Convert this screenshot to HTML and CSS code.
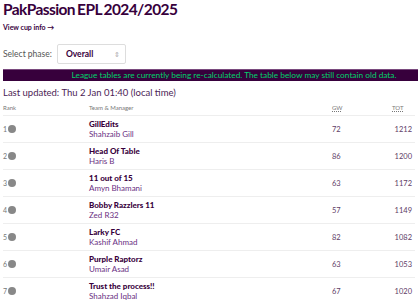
FILE: index.html
```
<!DOCTYPE html>
<html lang="en">
<head>
    <meta charset="UTF-8">
    <title>PakPassion EPL 2024/2025</title>
    <link rel="stylesheet" href="styles.css">
</head>
<body>
    <div class="page">
        <h1>PakPassion EPL 2024/2025</h1>
        <a class="cup-link" href="#">View cup info &rarr;</a>

        <div class="phase">
            <label for="phase">Select phase:</label>
            <div class="select-box">
                <span>Overall</span>
                <span class="arrows">&#8661;</span>
            </div>
        </div>

        <div class="banner">League tables are currently being re-calculated. The table below may still contain old data.</div>

        <p class="updated">Last updated: Thu 2 Jan 01:40 (local time)</p>

        <table class="standings">
            <thead>
                <tr>
                    <th class="rank">Rank</th>
                    <th class="team">Team &amp; Manager</th>
                    <th class="gw"><abbr>GW</abbr></th>
                    <th class="tot"><abbr>TOT</abbr></th>
                </tr>
            </thead>
            <tbody>
                <tr><td class="rank">1<span class="dot"></span></td><td class="team"><strong>GillEdits</strong><span>Shahzaib Gill</span></td><td class="gw">72</td><td class="tot">1212</td></tr>
                <tr><td class="rank">2<span class="dot"></span></td><td class="team"><strong>Head Of Table</strong><span>Haris B</span></td><td class="gw">86</td><td class="tot">1200</td></tr>
                <tr><td class="rank">3<span class="dot"></span></td><td class="team"><strong>11 out of 15</strong><span>Amyn Bhamani</span></td><td class="gw">63</td><td class="tot">1172</td></tr>
                <tr><td class="rank">4<span class="dot"></span></td><td class="team"><strong>Bobby Razzlers 11</strong><span>Zed R32</span></td><td class="gw">57</td><td class="tot">1149</td></tr>
                <tr><td class="rank">5<span class="dot"></span></td><td class="team"><strong>Larky FC</strong><span>Kashif Ahmad</span></td><td class="gw">82</td><td class="tot">1082</td></tr>
                <tr><td class="rank">6<span class="dot"></span></td><td class="team"><strong>Purple Raptorz</strong><span>Umair Asad</span></td><td class="gw">63</td><td class="tot">1053</td></tr>
                <tr><td class="rank">7<span class="dot"></span></td><td class="team"><strong>Trust the process!!</strong><span>Shahzad Iqbal</span></td><td class="gw">67</td><td class="tot">1020</td></tr>
            </tbody>
        </table>
    </div>
</body>
</html>
```

FILE: styles.css
```
body {
    margin: 0;
    font-family: Lato, sans-serif;
    color: #37003c;
    background-color: #fff;
    overflow: hidden;
}
.page {
    padding: 0 3px;
}
h1 {
    margin: 0;
    font-size: 15.5px;
    line-height: 19px;
    font-weight: 700;
    letter-spacing: -0.6px;
    word-spacing: -1px;
    color: #37003c;
}
.cup-link {
    display: block;
    margin-top: 4px;
    font-size: 7px;
    line-height: 9px;
    font-weight: 700;
    color: #37003c;
    text-decoration: none;
}
.phase {
    display: flex;
    align-items: center;
    gap: 5px;
    margin-top: 12px;
    font-size: 8.5px;
    color: #555;
}
.select-box {
    display: flex;
    align-items: center;
    justify-content: space-between;
    width: 69px;
    height: 20px;
    box-sizing: border-box;
    padding: 0 5px 0 8px;
    border: 1px solid #ddd;
    border-radius: 2px;
    font-weight: 700;
    color: #37003c;
}
.arrows {
    font-size: 7px;
    color: #aaa;
    font-weight: 400;
}
.banner {
    margin-top: 5px;
    margin-right: -3px;
    height: 11px;
    line-height: 11px;
    background-color: #37003c;
    border-top: 1px solid #7a4a7e;
    color: #00d26a;
    font-size: 8.3px;
    text-align: center;
    white-space: nowrap;
    padding-left: 47px;
}
.updated {
    margin: 6px 0 0;
    font-size: 9.5px;
    line-height: 12px;
    color: #4b1d55;
}
.standings {
    width: 100%;
    border-collapse: collapse;
    margin-top: 5px;
}
.standings th {
    font-size: 6px;
    font-weight: 400;
    color: #777;
    text-align: left;
    padding: 0 0 4px;
    border-bottom: 1px solid #eee;
}
.standings abbr {
    text-decoration: underline dotted;
}
.standings td {
    height: 26px;
    padding: 0;
    border-bottom: 1px solid #eee;
    font-size: 7.5px;
    vertical-align: middle;
}
.rank {
    width: 86px;
    color: #777;
}
td.rank {
    font-size: 7px;
}
.dot {
    display: inline-block;
    width: 8px;
    height: 8px;
    margin-left: 1px;
    border-radius: 50%;
    background-color: #888;
    vertical-align: -1px;
}
.team strong {
    display: block;
    font-size: 8px;
    line-height: 9px;
    font-weight: 900;
    color: #37003c;
}
.team span {
    display: block;
    font-size: 8px;
    line-height: 10px;
    color: #6a2f82;
}
.gw {
    width: 60px;
    color: #5e3c66;
}
.tot {
    width: 20px;
    text-align: right;
    color: #5e3c66;
    padding-right: 3px !important;
}
```
